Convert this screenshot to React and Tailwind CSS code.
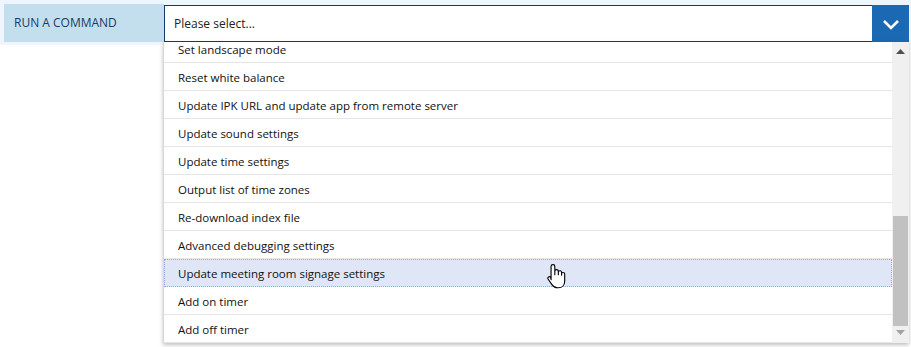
import React from "react";

const items = [
  "Set landscape mode",
  "Reset white balance",
  "Update IPK URL and update app from remote server",
  "Update sound settings",
  "Update time settings",
  "Output list of time zones",
  "Re-download index file",
  "Advanced debugging settings",
  "Update meeting room signage settings",
  "Add on timer",
  "Add off timer",
];

function Hand() {
  return (
    <svg width="20" height="25" viewBox="1 1 15.5 20" className="absolute left-[547px] top-[264px]">
      <path
        d="M5.5 1.5c.8 0 1.5.7 1.5 1.5v6.5V6.8c0-.8.7-1.3 1.4-1.3s1.4.6 1.4 1.3v2.7-1.8c0-.8.6-1.3 1.3-1.3s1.3.6 1.3 1.3v2.2-.9c0-.7.6-1.2 1.2-1.2s1.3.5 1.3 1.2v5.5c0 3-1.8 5.5-5 5.5H9c-2 0-3.2-.9-4.3-2.5l-3-4.3c-.4-.6-.3-1.4.3-1.8s1.3-.2 1.7.3L4 13.5V3c0-.8.7-1.5 1.5-1.5z"
        fill="#fff"
        stroke="#000"
        strokeWidth="0.9"
        strokeLinejoin="round"
      />
    </svg>
  );
}

export default function App() {
  return (
    <div className="relative w-[911px] h-[347px] bg-white" style={{ fontFamily: '"Open Sans", "Noto Sans", sans-serif' }}>
      <div className="flex h-[45px] bg-[#eef5fc] pt-[4px] pl-[4px] pr-[2px]">
        <div className="flex h-[38px] w-[160px] items-center bg-[#c3dfee] pl-[10px] text-[12px] text-[#1b3a64]">
          RUN A COMMAND
        </div>
        <div className="flex flex-1 flex-col">
          <div className="mt-[1px] flex h-[37px] border border-[#0f3e6e] bg-white">
            <div className="flex flex-1 items-center pl-[9px] text-[12px] text-[#222]">Please select...</div>
            <div className="-my-[1px] -mr-[1px] flex w-[37px] items-center justify-center bg-[#1a69b2]">
              <svg width="18" height="12" viewBox="0 0 18 12">
                <path d="M2 3l7 7 7-7" fill="none" stroke="#fff" strokeWidth="2.6" />
              </svg>
            </div>
          </div>
        </div>
      </div>
      <div className="absolute left-[163px] top-[42px] flex h-[301px] w-[746px] overflow-hidden border-l border-[#d8d8d8] bg-white shadow-[0_2px_4px_rgba(0,0,0,0.25)]">
        <div className="flex-1 overflow-hidden">
          <div className="-mt-[7px] flex flex-col">
            {items.map((t, i) => {
              const hl = i === 8;
              return (
                <div
                  key={t}
                  className={
                    hl
                      ? "flex h-[28px] items-center border border-dotted border-[#8ea9dd] bg-[#dfe7f6] pl-[13px] pt-[1px] text-[11.5px] text-[#111]"
                      : "flex h-[28px] items-center border-b border-[#e6e6e6] pl-[14px] pt-[2px] text-[11.5px] text-[#111]"
                  }
                >
                  {t}
                </div>
              );
            })}
          </div>
        </div>
        <div className="flex w-[17px] flex-col bg-[#f0f0f0]">
          <div className="flex h-[14px] items-end justify-center pb-[2px]">
            <svg width="9" height="5" viewBox="0 0 9 5"><path d="M4.5 0L9 5H0z" fill="#505050" /></svg>
          </div>
          <div className="flex-1 px-[1px]">
            <div className="mt-[160px] h-[110px] w-full bg-[#c1c1c1]" />
          </div>
          <div className="flex h-[17px] items-start justify-center pt-[4px]">
            <svg width="9" height="5" viewBox="0 0 9 5"><path d="M0 0h9L4.5 5z" fill="#a3a3a3" /></svg>
          </div>
        </div>
      </div>
      <Hand />
    </div>
  );
}
